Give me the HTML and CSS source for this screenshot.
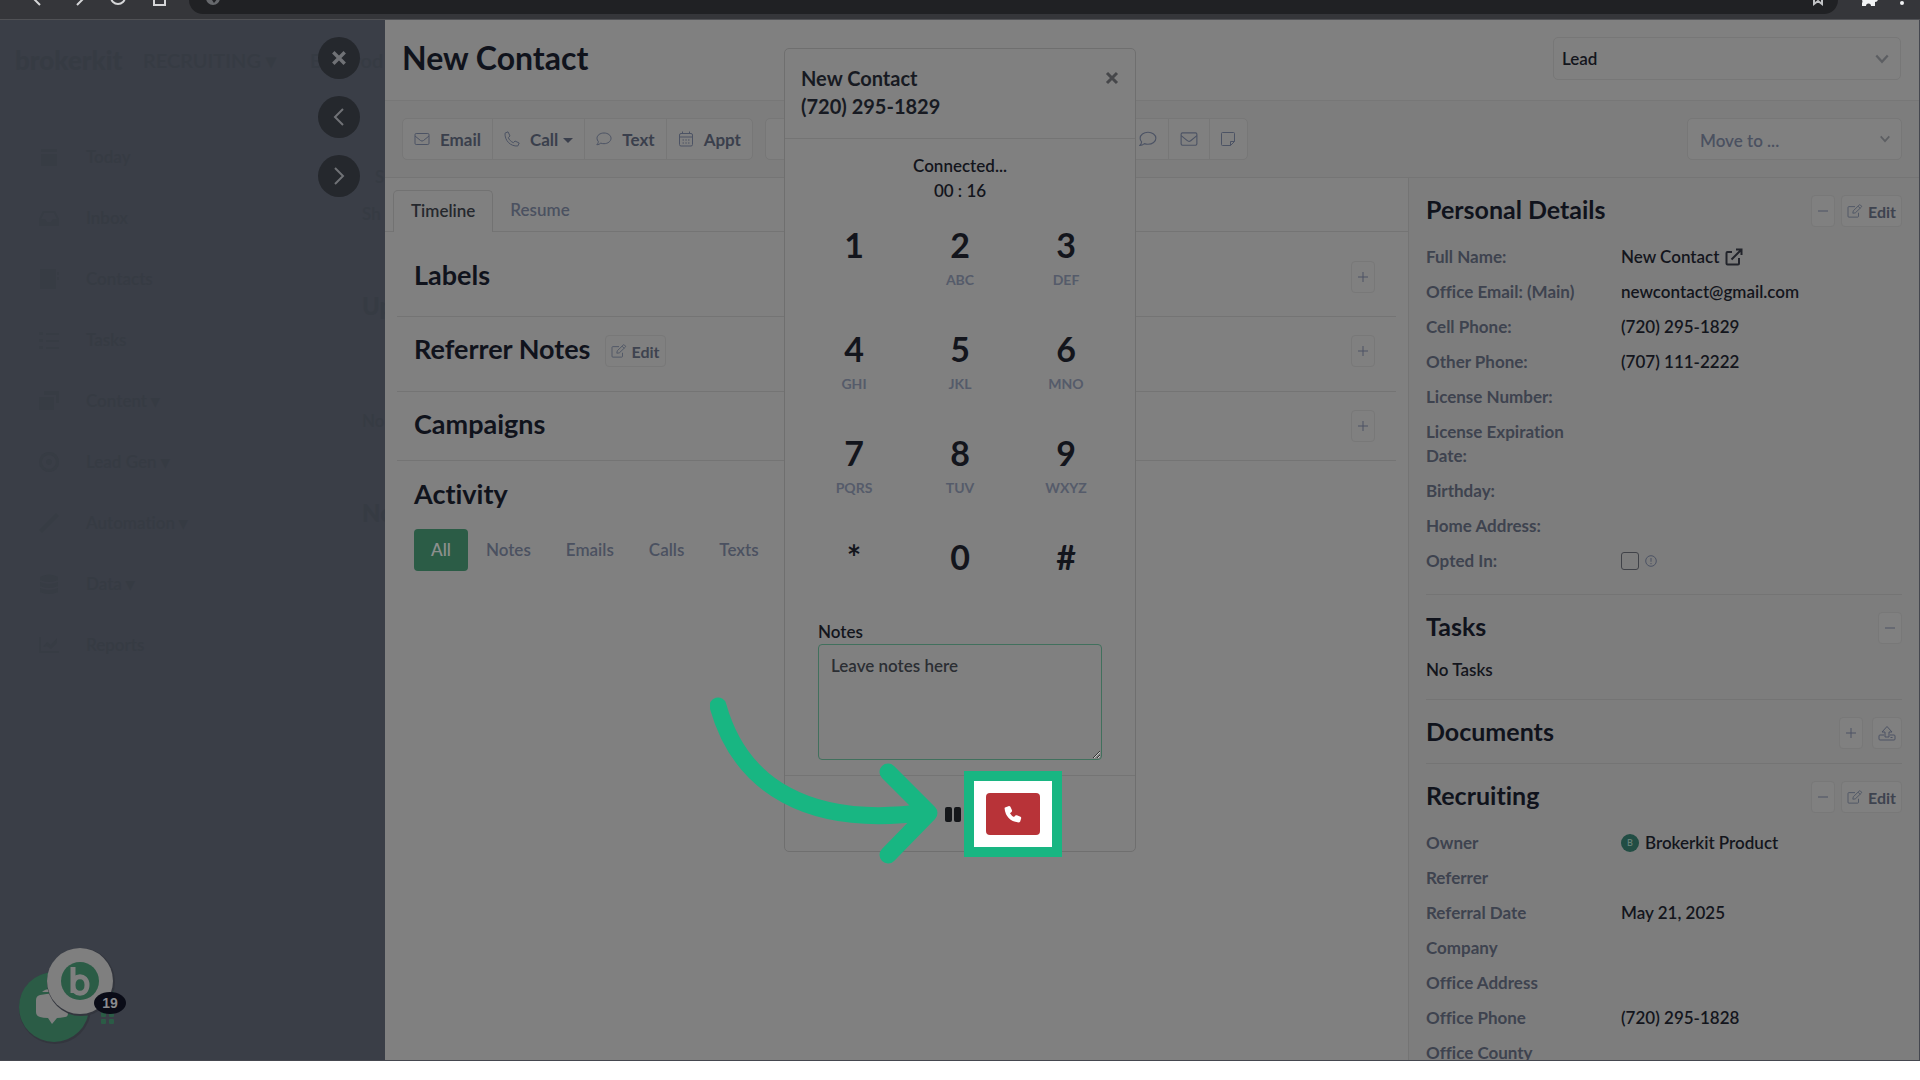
FILE: index.html
```html
<!DOCTYPE html>
<html lang="en">
<head>
<meta charset="utf-8">
<title>New Contact</title>
<link rel="stylesheet" href="styles.css">
</head>
<body>
<svg width="0" height="0" class="sprite" aria-hidden="true">
  <symbol id="mail" viewBox="0 0 16 16"><rect x="1" y="2.500" width="14" height="11" rx="1.200"/><path d="M1 5l5.500 4.500q1.500 1.200 3 0L15 5"/></symbol>
  <symbol id="phone" viewBox="0 0 16 16"><path d="M1 2.200 4 .8 6 5 4.300 6.600C5.300 8.900 7 10.700 9.400 11.700L11 10l4.200 2-1.400 3C6.500 15.600.6 9.500 1 2.200z"/></symbol>
  <symbol id="chat" viewBox="0 0 16 16"><path d="M8 2c3.900 0 7 2.300 7 5.300s-3.100 5.400-7 5.400c-1.200 0-2.300-.2-3.200-.6C3.700 13 2.400 13.800.8 13.700 1.800 12.700 2.300 11.800 2.300 10.500 1.500 9.600 1 8.500 1 7.300 1 4.300 4.100 2 8 2z"/></symbol>
  <symbol id="cal" viewBox="0 0 16 16"><rect x="1.500" y="2.500" width="13" height="12.500" rx="1.500"/><path d="M1.500 6h13M4.500.5v2M11.500.5v2M4.500 9h1.500M7.300 9h1.500M10 9h1.500M4.500 12h1.500M7.300 12h1.500M10 12h1.500"/></symbol>
  <symbol id="note" viewBox="0 0 16 16"><path d="M2.500 1.500h11a1 1 0 0 1 1 1v8l-4 4h-8a1 1 0 0 1-1-1v-11a1 1 0 0 1 1-1zM14.500 10.500h-4v4"/></symbol>
  <symbol id="pen" viewBox="0 0 18 16"><path d="M9 3H2a1 1 0 0 0-1 1v10a1 1 0 0 0 1 1h10a1 1 0 0 0 1-1v-4M6.500 10.500 7 7.800 13.800 1.200a1 1 0 0 1 1.400 0l1 1a1 1 0 0 1 0 1.400L9.300 10.200zM12.500 2.500l2.400 2.400"/></symbol>
  <symbol id="ext" viewBox="0 0 18 18"><path d="M7 4H2.500A1 1 0 0 0 1.500 5v10.500a1 1 0 0 0 1 1H13a1 1 0 0 0 1-1V10M6.500 11.500 16 2M11 1.500h5.500V7"/></symbol>
  <symbol id="plus" viewBox="0 0 12 12"><path d="M1 6h10M6 1v10"/></symbol>
  <symbol id="minus" viewBox="0 0 12 12"><path d="M1 6h10"/></symbol>
  <symbol id="upload" viewBox="0 0 18 16"><path d="M6 10H2a1 1 0 0 0-1 1v3a1 1 0 0 0 1 1h14a1 1 0 0 0 1-1v-3a1 1 0 0 0-1-1h-4M7 12V7H4l5-5.500L14 7h-3v5zM12.500 12.500h2"/></symbol>
  <symbol id="x" viewBox="0 0 14 14"><path d="M2 2l10 10M12 2 2 12"/></symbol>
  <symbol id="left" viewBox="0 0 12 20"><path d="M10 2 2 10l8 8"/></symbol>
  <symbol id="right" viewBox="0 0 12 20"><path d="M2 2l8 8-8 8"/></symbol>
  <symbol id="down" viewBox="0 0 14 10"><path d="M2 2l5 5.500L12 2"/></symbol>
  <symbol id="info" viewBox="0 0 12 12"><circle cx="6" cy="6" r="5.300"/><path d="M6 3v3.800M6 8v1.200"/></symbol>
</svg>

<header class="browser">
  <div class="browser-nav">
    <svg width="180" height="20" viewBox="0 0 180 20"><path d="M31-4l9 9M86-4l-9 9" /><path d="M111-3a7 7 0 0 0 14 0" /><path d="M154-6v11h11V-6"/></svg>
  </div>
  <div class="address"><svg width="16" height="16" viewBox="0 0 16 16"><circle cx="8" cy="-2" r="7"/><path d="M8-4l5 2-4 5-2-3z"/></svg>
    <svg width="12" height="16" viewBox="0 0 12 16"><path class="star" d="M2-3v7l4-3 4 3v-7"/></svg></div>
  <div class="browser-tools">
    <svg width="60" height="20" viewBox="0 0 60 20"><path d="M4 6h4a2.500 2.500 0 0 1 5 0h4V2a3 3 0 0 0 3-3v-3H4v4a3 3 0 0 1 0 3z"/><circle cx="44" cy="3" r="2"/></svg>
  </div>
</header>

<div class="shell">
  <aside class="backdrop">
    <div class="backdrop-head"><b class="brand">brokerkit</b><span class="mode">RECRUITING ▾</span><span class="account">BK Prod</span></div>
    <div class="backdrop-body">
      <nav class="side-nav">
        <a href="#"><svg viewBox="0 0 20 20"><path d="M2 2h16v3H2zM2 7h16v12H2z"/></svg>Today</a>
        <a href="#"><svg viewBox="0 0 20 20"><path d="M4 3h12l4 8v7H0v-7zM5 5l-3 6h4l2 3h4l2-3h4l-3-6z"/></svg>Inbox</a>
        <a href="#"><svg viewBox="0 0 20 20"><path d="M1 0h16v20H1zM18 3h2v3h-2zM18 8h2v3h-2z"/></svg>Contacts</a>
        <a href="#"><svg viewBox="0 0 20 20"><path d="M0 2h4v3H0zM7 3h13v2H7zM0 9h4v3H0zM7 10h13v2H7zM0 16h4v3H0zM7 17h13v2H7z"/></svg>Tasks</a>
        <a href="#"><svg viewBox="0 0 20 20"><path d="M5 0h15v12h-3V4H5zM0 6h15v13H0z"/></svg>Content ▾</a>
        <a href="#"><svg viewBox="0 0 20 20"><path fill-rule="evenodd" d="M10 0a10 10 0 1 0 .1 0zM10 3a7 7 0 1 1-.1 0zM10 7a3 3 0 1 0 .1 0z"/></svg>Lead Gen ▾</a>
        <a href="#"><svg viewBox="0 0 20 20"><path d="M0 17 17 0l3 3L3 20z"/></svg>Automation ▾</a>
        <a href="#"><svg viewBox="0 0 20 20"><path d="M1 3q9-5 18 0v3q-9 4-18 0zM1 8q9 4 18 0v4q-9 4-18 0zM1 14q9 4 18 0v4q-9 4-18 0z"/></svg>Data ▾</a>
        <a href="#"><svg viewBox="0 0 20 20"><path d="M0 2h2v14h18v2H0zM4 12l4-5 4 3 6-7v5l-6 6-4-3z"/></svg>Reports</a>
      </nav>
      <div class="peek">
        <span class="peek-tab">S</span>
        <span class="peek-line">Sh</span>
        <b class="peek-title">Up</b>
        <span class="peek-text">No</span>
        <b class="peek-title">No</b>
      </div>
    </div>
    <div class="drawer-nav">
      <button aria-label="Close"><svg class="ico bold" width="16" height="16"><use href="#x"/></svg></button>
      <button aria-label="Previous"><svg class="ico mid" width="12" height="20"><use href="#left"/></svg></button>
      <button aria-label="Next"><svg class="ico mid" width="12" height="20"><use href="#right"/></svg></button>
    </div>
    <div class="widgets">
      <svg width="110" height="110" viewBox="0 0 110 110">
        <circle cx="36" cy="66" r="36" class="shade"/>
        <g class="green"><circle cx="35" cy="65" r="35"/><rect x="82" y="46" width="13" height="8" rx="2"/><rect x="82" y="70" width="5" height="5" rx="1"/><rect x="90" y="70" width="5" height="5" rx="1"/><rect x="82" y="77" width="5" height="5" rx="1"/><rect x="90" y="77" width="5" height="5" rx="1"/></g>
        <g class="light"><path d="M23 50q5-5 14-2v2z"/><path d="M21 53q13-3 26 0 2 1 2 4v14q0 4-3 4-5 1-8 1l-5 6-4-6q-5 0-8-1-4-1-4-5V58q0-4 4-5z"/></g>
        <circle cx="62" cy="40" r="34" class="shade"/>
        <circle cx="61" cy="39" r="33" class="light"/>
        <circle cx="61" cy="39" r="19" class="green"/>
        <path class="mark" d="M54 25v26M54 43c0-11 14-11 14 0s-14 11-14 0"/>
      </svg>
      <span class="count">19</span>
    </div>
  </aside>

  <main class="drawer">
    <div class="drawer-head">
      <h1>New Contact</h1>
      <div class="picker"><select aria-label="Contact type"><option>Lead</option></select><svg class="ico mid" width="16" height="12"><use href="#down"/></svg></div>
    </div>
    <div class="toolbar">
      <div class="group">
        <button><svg class="ico" width="16" height="16"><use href="#mail"/></svg>Email</button>
        <button><svg class="ico" width="16" height="16"><use href="#phone"/></svg><span>Call<i class="caret"></i></span></button>
        <button><svg class="ico" width="16" height="16"><use href="#chat"/></svg>Text</button>
        <button><svg class="ico" width="16" height="16"><use href="#cal"/></svg>Appt</button>
      </div>
      <div class="group logs">
        <button class="wide" aria-label="Log"></button>
        <button aria-label="Log text"><svg class="ico" width="18" height="18"><use href="#chat"/></svg></button>
        <button aria-label="Log email"><svg class="ico" width="18" height="18"><use href="#mail"/></svg></button>
        <button aria-label="Log note"><svg class="ico" width="16" height="16"><use href="#note"/></svg></button>
      </div>
      <div class="picker move"><select aria-label="Move to"><option>Move to ...</option></select><svg class="ico mid" width="12" height="10"><use href="#down"/></svg></div>
    </div>
    <div class="columns">
      <section class="timeline">
        <div class="tabs"><a class="tab on" href="#">Timeline</a><a class="tab" href="#">Resume</a></div>
        <div class="cards">
          <div class="card first"><h2>Labels</h2><button class="mini" aria-label="Add label"><svg class="ico" width="12" height="12"><use href="#plus"/></svg></button></div>
          <div class="card"><h2>Referrer Notes</h2><button class="mini"><svg class="ico" width="16" height="14"><use href="#pen"/></svg>Edit</button><button class="mini" aria-label="Add note"><svg class="ico" width="12" height="12"><use href="#plus"/></svg></button></div>
          <div class="card third"><h2>Campaigns</h2><button class="mini" aria-label="Add campaign"><svg class="ico" width="12" height="12"><use href="#plus"/></svg></button></div>
          <div class="activity">
            <h2>Activity</h2>
            <div class="filters"><button class="on">All</button><button>Notes</button><button>Emails</button><button>Calls</button><button>Texts</button></div>
          </div>
        </div>
      </section>

      <aside class="details">
        <section>
          <div class="bar"><h2>Personal Details</h2><button class="mini" aria-label="Collapse"><svg class="ico" width="12" height="12"><use href="#minus"/></svg></button><button class="mini"><svg class="ico" width="16" height="14"><use href="#pen"/></svg>Edit</button></div>
          <dl>
            <dt>Full Name:</dt><dd>New Contact <svg class="ico dark" width="18" height="18"><use href="#ext"/></svg></dd>
            <dt>Office Email: (Main)</dt><dd>newcontact@gmail.com</dd>
            <dt>Cell Phone:</dt><dd>(720) 295-1829</dd>
            <dt>Other Phone:</dt><dd>(707) 111-2222</dd>
            <dt>License Number:</dt><dd></dd>
            <dt>License Expiration Date:</dt><dd></dd>
            <dt>Birthday:</dt><dd></dd>
            <dt>Home Address:</dt><dd></dd>
            <dt><label for="opted">Opted In:</label></dt><dd><input type="checkbox" id="opted"><svg class="ico" width="12" height="12"><use href="#info"/></svg></dd>
          </dl>
        </section>
        <section>
          <div class="bar"><h2>Tasks</h2><button class="mini" aria-label="Collapse"><svg class="ico" width="12" height="12"><use href="#minus"/></svg></button></div>
          <p>No Tasks</p>
        </section>
        <section>
          <div class="bar loose"><h2>Documents</h2><button class="mini" aria-label="Add document"><svg class="ico" width="12" height="12"><use href="#plus"/></svg></button><button class="mini" aria-label="Upload"><svg class="ico" width="18" height="16"><use href="#upload"/></svg></button></div>
        </section>
        <section>
          <div class="bar"><h2>Recruiting</h2><button class="mini" aria-label="Collapse"><svg class="ico" width="12" height="12"><use href="#minus"/></svg></button><button class="mini"><svg class="ico" width="16" height="14"><use href="#pen"/></svg>Edit</button></div>
          <dl>
            <dt>Owner</dt><dd><span class="avatar">B</span>Brokerkit Product</dd>
            <dt>Referrer</dt><dd></dd>
            <dt>Referral Date</dt><dd>May 21, 2025</dd>
            <dt>Company</dt><dd></dd>
            <dt>Office Address</dt><dd></dd>
            <dt>Office Phone</dt><dd>(720) 295-1828</dd>
            <dt>Office County</dt><dd></dd>
          </dl>
        </section>
      </aside>
    </div>
  </main>
</div>

<div class="dialog" role="dialog" aria-label="Call">
  <div class="dialog-head"><div>New Contact<br>(720) 295-1829</div><button aria-label="Close"><svg class="ico bold" width="14" height="14"><use href="#x"/></svg></button></div>
  <div class="dialog-body">
    <div class="status">Connected...<br>00 : 16</div>
    <div class="keys">
      <button>1<small></small></button><button>2<small>ABC</small></button><button>3<small>DEF</small></button>
      <button>4<small>GHI</small></button><button>5<small>JKL</small></button><button>6<small>MNO</small></button>
      <button>7<small>PQRS</small></button><button>8<small>TUV</small></button><button>9<small>WXYZ</small></button>
      <button>*<small></small></button><button>0<small></small></button><button>#<small></small></button>
    </div>
    <div class="notes"><label for="notes">Notes</label><textarea id="notes" placeholder="Leave notes here"></textarea></div>
  </div>
  <div class="dialog-foot">
    <button aria-label="Mute"><svg width="12" height="14" viewBox="0 0 12 14"><rect x="2" y="0" width="5" height="10" rx="2"/></svg></button>
    <button aria-label="Hold"><svg width="16" height="16" viewBox="0 0 16 16"><rect x="0" y="1" width="7" height="15" rx="2"/><rect x="9" y="1" width="7" height="15" rx="2"/></svg></button>
    <span class="spot"><button class="hang" aria-label="Hang up"><svg width="18" height="18" viewBox="0 0 18 18"><path d="M1 2.500 5 1q1 0 1.400.8L8 5.300q.2 1-.5 1.600L6 8.300q1.500 2.600 4 3.800l1.300-1.600q.7-.6 1.600-.2l3.600 1.500q.8.500.7 1.400l-1 3.400q-.3.800-1.200.8Q8.500 17 4.700 13 1 9 .6 3.500 .5 2.800 1 2.500z"/></svg></button></span>
  </div>
  <svg class="arrow" width="230" height="168" viewBox="0 0 230 168"><path d="M8 9C30 88 98 132 217 115M178 75l41 41-41 42"/></svg>
</div>
</body>
</html>
```
FILE: styles.css
```css
* { box-sizing: border-box; }
body { margin: 0; height: 100vh; position: relative; overflow: hidden; background: #fff; color: #13151c; font: 600 17px/25px Lato, "Noto Sans", sans-serif; font-variant-ligatures: no-common-ligatures; }
button, select, textarea { font: inherit; color: inherit; margin: 0; }
button { border: 0; background: none; padding: 0; display: inline-flex; align-items: center; justify-content: center; }
a { color: inherit; text-decoration: none; }
h1, h2, p, dl, dd { margin: 0; }
h1, h2 { color: #10131c; font-weight: 700; }
h1 { font-size: 32px; line-height: 40px; }
h2 { font-size: 25px; line-height: 32px; padding-bottom: 4px; }
.sprite { position: absolute; }
.ico { fill: none; stroke: #4c5364; stroke-width: 1; flex: none; }
.ico.mid { stroke: #5c5e62; stroke-width: 2; }
.ico.dark { stroke: #22242b; stroke-width: 2; }
.ico.bold { stroke: #46474a; stroke-width: 3; }

.browser { height: 20px; background: #35363a; border-bottom: 1px solid #505155; display: flex; align-items: flex-start; overflow: hidden; }
.browser svg { display: block; }
.browser-nav { width: 189px; }
.browser-nav path { fill: none; stroke: #d5d6d8; stroke-width: 2; }
.address { flex: 1; height: 14px; background: #202124; border-radius: 0 0 14px 14px; padding: 0 14px 0 16px; display: flex; justify-content: space-between; fill: #66686c; }
.address path { fill: #202124; }
.address .star { fill: none; stroke: #c0c1c4; stroke-width: 2; }
.browser-tools { width: 82px; padding-left: 20px; fill: #f1f3f4; }

.shell { height: calc(100vh - 39px); display: grid; grid-template-columns: 385px 1fr; border-bottom: 1px solid #45474f; border-right: 1px solid #45474f; overflow: hidden; }
.backdrop { position: relative; overflow: hidden; background: #3a3e47; color: #363b43; }
.backdrop-head { height: 80px; display: flex; align-items: center; padding-left: 15px; white-space: nowrap; font-size: 20px; }
.backdrop-head > * { flex: none; }
.brand { width: 128px; font-size: 26px; }
.mode { width: 167px; }
.backdrop-body { display: flex; padding-top: 26px; }
.side-nav { width: 362px; flex: none; padding-left: 38px; }
.side-nav a { height: 61px; display: flex; align-items: center; gap: 26px; }
.side-nav svg { width: 22px; height: 20px; fill: #373c44; }
.peek { display: flex; flex-direction: column; padding-top: 38px; }
.peek-tab { padding-left: 13px; }
.peek-line { margin-top: 12px; }
.peek-title { font-size: 24px; line-height: 32px; margin-top: 64px; }
.peek-text { margin-top: 86px; }
.drawer-nav { position: absolute; top: 17px; left: 318px; display: flex; flex-direction: column; gap: 17px; }
.drawer-nav button { width: 42px; height: 42px; border-radius: 50%; background: #25282d; }
.drawer-nav .ico { stroke: #707276; }
.widgets { position: absolute; left: 19px; bottom: 8px; }
.widgets svg { display: block; }
.shade { fill: #33363e; }
.green { fill: #2b5c46; }
.light { fill: #7f7f7f; }
.mark { fill: none; stroke: #7f7f7f; stroke-width: 5; }
.count { position: absolute; left: 75px; top: 50px; width: 32px; height: 22px; border-radius: 50%; background: #0a0c17; color: #8b8c90; font: 700 14px/22px "Liberation Sans", sans-serif; text-align: center; }

.drawer { background: #808080; display: flex; flex-direction: column; min-width: 0; overflow: hidden; }
.drawer-head { flex: none; height: 81px; padding: 0 18px 4px 17px; display: flex; align-items: center; justify-content: space-between; border-bottom: 1px solid #777; }
.picker { position: relative; width: 348px; height: 43px; }
.picker select { appearance: none; width: 100%; height: 100%; padding: 0 8px; border: 1px solid #777; border-radius: 5px; background: #808080; }
.picker .ico { position: absolute; right: 11px; top: 16px; }
.toolbar { flex: none; height: 77px; padding: 0 17px; display: flex; align-items: center; gap: 12px; background: #7d7d7d; border-bottom: 1px solid #757575; color: #3a3f4c; }
.group { height: 42px; display: flex; border: 1px solid #777; border-radius: 5px; background: #808080; font-weight: 700; }
.group button { padding: 0 11px; gap: 10px; }
.group button + button { border-left: 1px solid #777; }
.group.logs button { width: 41px; padding: 0; }
.group.logs .wide { width: 361px; }
.group.logs button:last-child { width: 38px; }
.caret { display: inline-block; margin-left: 5px; vertical-align: 3px; border: 5px solid transparent; border-top-color: #3a3f4c; border-bottom: 0; }
.move { width: 215px; height: 42px; margin-left: auto; }
.move select { padding: 2px 12px 0; color: #4b5160; }
.columns { flex: 1; display: grid; grid-template-columns: minmax(0, 1fr) 511px; min-height: 0; }
.tabs { height: 54px; padding: 12px 8px 0; display: flex; border-bottom: 1px solid #747474; }
.tab { height: 42px; padding: 0 17px; line-height: 40px; color: #4b5160; }
.tab.on { border: 1px solid #727272; border-bottom: 0; border-radius: 5px 5px 0 0; background: #808080; color: #25282d; }
.cards { padding: 0 12px; }
.cards h2 { font-size: 27px; }
.card { display: flex; align-items: center; gap: 14px; height: 75px; padding: 0 21px 6px 17px; border-bottom: 1px solid #747474; }
.card.first { height: 85px; padding-bottom: 0; padding-top: 6px; }
.card.third { height: 69px; padding-bottom: 0; }
.card .mini:last-child { margin-left: auto; }
.mini { height: 32px; padding: 0 5px; gap: 5px; border: 1px solid #787878; border-radius: 4px; background: #808080; color: #3e434f; font-size: 16px; font-weight: 700; }
.activity { padding: 17px; }
.filters { display: flex; gap: 1px; margin-top: 15px; color: #4b5160; }
.filters button { height: 42px; padding: 0 17px 2px; border-radius: 4px; }
.filters .on { background: #2b5c46; color: #8b8f8d; }
.details { background: #7d7d7d; border-left: 1px solid #747474; padding: 0 17px; }
.details section + section { border-top: 1px solid #747474; }
.bar { display: flex; align-items: center; gap: 6px; padding-top: 15px; }
.bar.loose { gap: 9px; padding-bottom: 12px; }
.bar h2 { margin-right: auto; }
.details dl { display: grid; grid-template-columns: 160px 1fr; gap: 11px 35px; padding: 16px 0 21px; line-height: 24px; }
.details dt { color: #3e434f; font-weight: 700; }
.details dd { display: flex; align-items: center; gap: 6px; }
.details p { padding: 11px 0 17px; }
.details input { appearance: none; width: 18px; height: 18px; margin: 0; border: 1px solid #404248; border-radius: 3px; }
.avatar { width: 18px; height: 18px; border-radius: 50%; background: #214d44; color: #668078; font-size: 9px; line-height: 18px; text-align: center; }

.dialog { position: absolute; top: 48px; left: 0; right: 0; width: 352px; margin: 0 auto; background: #808080; border: 1px solid #6f6f6f; border-radius: 5px; }
.dialog-head { height: 90px; padding: 15px 16px; display: flex; align-items: flex-start; justify-content: space-between; border-bottom: 1px solid #747474; color: #171a22; font-size: 20px; line-height: 28px; font-weight: 700; }
.dialog-head button { margin-top: 7px; }
.dialog-body { padding: 14px 33px 15px; }
.status { text-align: center; }
.keys { display: grid; grid-template-columns: repeat(3, 106px); grid-template-rows: repeat(3, 104px) 92px; justify-content: center; margin: 12px -20px 0; }
.keys button { flex-direction: column; justify-content: flex-start; padding-top: 8px; font-size: 34px; line-height: 44px; font-weight: 700; }
.keys small { height: 26px; font-size: 14px; line-height: 26px; color: #555b6a; }
.notes { display: flex; flex-direction: column; }
.notes textarea { height: 116px; padding: 8px 12px; border: 1px solid #41705d; border-radius: 4px; background: none; }
.notes textarea::placeholder { color: #2b2e33; opacity: 1; }
.dialog-foot { height: 76px; display: flex; align-items: center; justify-content: center; padding-right: 4px; border-top: 1px solid #747474; gap: 2px; fill: #15171a; }
.dialog-foot button { width: 54px; height: 42px; border-radius: 4px; }
.spot { border: 10px solid #18b682; background: #fff; padding: 12px; display: flex; margin: 0 -16px 0 -18px; z-index: 1; }
.dialog-foot .hang { background: #b83338; fill: #fff; }
.arrow { position: absolute; left: -75px; top: 648px; fill: none; stroke: #18b682; stroke-width: 17; stroke-linecap: round; stroke-linejoin: round; }
```
